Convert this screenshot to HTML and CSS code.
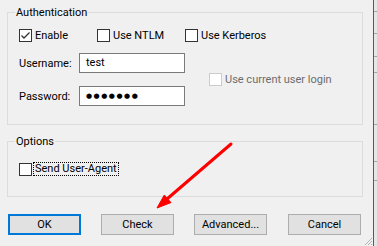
FILE: index.html
```html
<!DOCTYPE html>
<html>
<head>
<meta charset="utf-8">
<link rel="stylesheet" href="styles.css">
</head>
<body>
<div class="screen">
  <div class="dialog">
    <fieldset class="group auth">
      <legend>Authentication</legend>
      <div class="checks">
        <label class="cb"><span class="box"><svg class="tick" viewBox="0 0 11 11"><path d="M1.5 5.5 L4 8 L9.5 2.5"/></svg></span><span>Enable</span></label>
        <label class="cb"><span class="box"></span><span>Use NTLM</span></label>
        <label class="cb"><span class="box"></span><span>Use Kerberos</span></label>
      </div>
      <div class="creds">
        <span class="lbl">Username:</span>
        <div class="tb">test</div>
        <label class="cb current"><span class="box"></span><span>Use current user login</span></label>
        <span class="lbl">Password:</span>
        <div class="tb pw">●●●●●●●</div>
      </div>
    </fieldset>
    <fieldset class="group opts">
      <legend>Options</legend>
      <label class="cb ua"><span class="box"></span><span class="focus">Send User-Agent</span></label>
    </fieldset>
    <div class="buttons">
      <button class="btn default">OK</button>
      <button class="btn">Check</button>
      <button class="btn">Advanced...</button>
      <button class="btn last">Cancel</button>
    </div>
    <svg class="grip" viewBox="0 0 11 11"><path d="M10 3 L3 10 M10 6 L6 10 M10 9 L9 10"/></svg>
    <svg class="arrow" viewBox="0 0 373 246"><line x1="231" y1="144" x2="167" y2="199"/><polygon points="157,208 171,202.6 164.3,195"/></svg>
  </div>
  <div class="edge"></div>
  <div class="behind">
    <div class="seg s1"></div>
    <div class="seg s2"></div>
    <div class="seg s3"></div>
    <div class="seg s4"></div>
    <div class="seg s5"></div>
    <div class="seg s6"></div>
    <div class="seg s7"></div>
  </div>
</div>
</body>
</html>
```
FILE: styles.css
```css
* { box-sizing: border-box; }
html, body { margin: 0; padding: 0; }
body {
  font-family: Roboto, "Liberation Sans", sans-serif;
  font-size: 11px;
  color: #000;
  background: #f0f0f0;
}
.screen { display: flex; width: 377px; height: 246px; overflow: hidden; }
.dialog {
  position: relative;
  flex: none;
  width: 373px;
  height: 246px;
  background: #f0f0f0;
  padding-top: 5px;
}
.edge { flex: none; width: 1px; background: #5a5a5a; }
.behind { flex: 1; background: #e6e6e6; display: flex; flex-direction: column; }
.seg { flex: none; border-bottom: 1px solid #a8a8a8; }
.s1 { height: 12px; }
.s2 { height: 22px; }
.s3 { height: 23px; }
.s4 { height: 16px; }
.s5 { height: 52px; }
.s6 { height: 37px; }
.s7 { height: 19px; }

.group {
  margin: 0 0 0 7px;
  padding: 0;
  width: 356px;
  min-width: 0;
  border: 1px solid #dcdcdc;
}
.group legend {
  margin-left: 7px;
  padding: 0 1px;
  height: 15px;
  line-height: 15px;
}
.auth { height: 120px; }
.opts { height: 63px; margin-top: 9px; }

.cb { display: flex; align-items: center; gap: 3px; line-height: 13px; white-space: nowrap; }
.box {
  flex: none;
  display: flex;
  width: 13px;
  height: 13px;
  border: 1px solid #333;
  background: #fff;
}
.tick { width: 11px; height: 11px; fill: none; stroke: #333; stroke-width: 1.3; }

.checks {
  display: grid;
  grid-template-columns: 78px 88px auto;
  margin: 9px 0 0 11px;
}
.creds {
  display: grid;
  grid-template-columns: 60px 106px auto;
  grid-template-rows: 20px 20px;
  row-gap: 13px;
  align-items: center;
  margin: 11px 0 0 11px;
}
.lbl { line-height: 13px; }
.tb {
  height: 20px;
  border: 1px solid #7a7a7a;
  background: #fff;
  padding-left: 6px;
  line-height: 18px;
}
.pw {
  font-family: "DejaVu Sans", sans-serif;
  font-size: 7px;
  letter-spacing: 1.5px;
  padding-left: 6px;
}
.current {
  grid-column: 3;
  grid-row: 1 / span 2;
  margin-left: 24px;
  color: #6d6d6d;
}
.current .box { border-color: #cccccc; }

.ua { gap: 1px; margin: 13px 0 0 11px; }
.focus { border: 1px dotted #000; padding: 0 1px; line-height: 12px; }

.buttons { display: flex; gap: 20px; margin: 17px 0 0 8px; }
.btn {
  flex: none;
  width: 73px;
  height: 21px;
  padding: 0;
  border: 1px solid #adadad;
  background: #e1e1e1;
  font-family: inherit;
  font-size: 11px;
  color: #000;
}
.btn.default { border: 2px solid #0078d7; }
.btn.last { margin-left: 1px; }

.grip {
  position: absolute;
  right: 0;
  bottom: 0;
  width: 11px;
  height: 11px;
  fill: none;
  stroke: #b4b4b4;
  stroke-width: 1;
}
.arrow {
  position: absolute;
  left: 0;
  top: 0;
  width: 373px;
  height: 246px;
  pointer-events: none;
}
.arrow line { stroke: #ff0000; stroke-width: 3; stroke-linecap: round; }
.arrow polygon { fill: #ff0000; stroke: #ff0000; stroke-width: 1; stroke-linejoin: round; }
```
